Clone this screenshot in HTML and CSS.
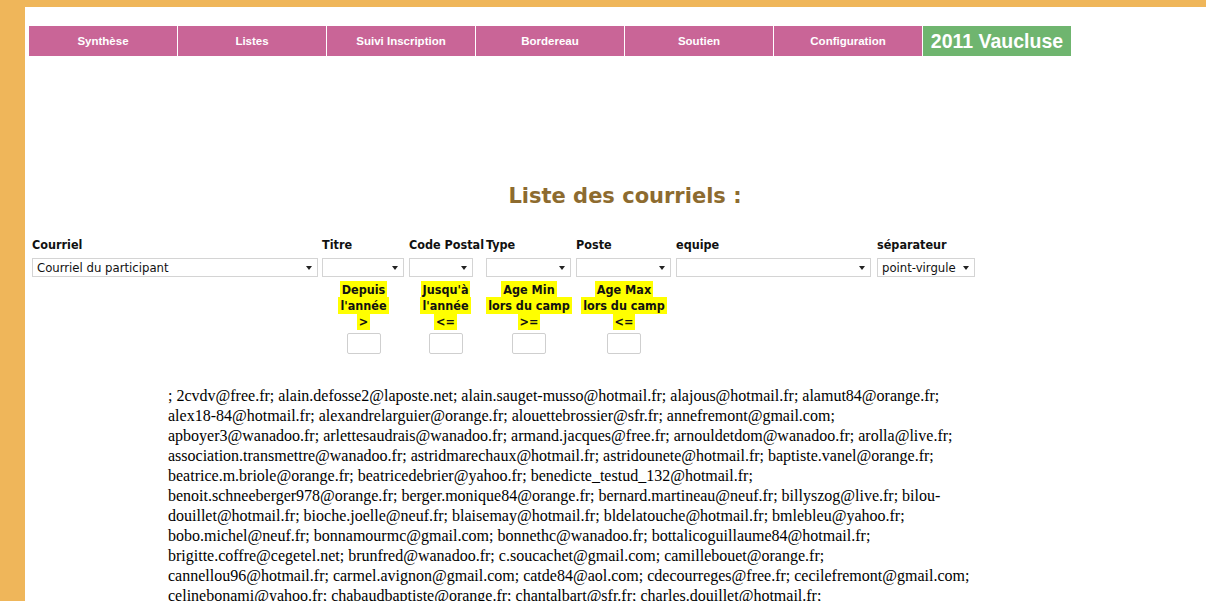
FILE: index.html
```html
<!DOCTYPE html>
<html lang="fr">
<head>
<meta charset="utf-8">
<title>Liste des courriels</title>
<link rel="stylesheet" href="styles.css">
</head>
<body>
<div class="page">
  <nav class="menu">
    <a class="tab">Synthèse</a>
    <a class="tab">Listes</a>
    <a class="tab">Suivi Inscription</a>
    <a class="tab">Bordereau</a>
    <a class="tab">Soutien</a>
    <a class="tab">Configuration</a>
    <span class="tab tab-year">2011 Vaucluse</span>
  </nav>

  <h1 class="title">Liste des courriels :</h1>

  <div class="filters">
    <div class="lbl">Courriel</div>
    <div class="lbl">Titre</div>
    <div class="lbl">Code Postal</div>
    <div class="lbl">Type</div>
    <div class="lbl">Poste</div>
    <div class="lbl">equipe</div>
    <div class="lbl">séparateur</div>

    <div class="sel w-courriel"><span class="sel-text">Courriel du participant</span><span class="arrow"></span></div>
    <div class="sel w-titre"><span class="sel-text"></span><span class="arrow"></span></div>
    <div class="sel w-cp"><span class="sel-text"></span><span class="arrow"></span></div>
    <div class="sel w-type"><span class="sel-text"></span><span class="arrow"></span></div>
    <div class="sel w-poste"><span class="sel-text"></span><span class="arrow"></span></div>
    <div class="sel w-equipe"><span class="sel-text"></span><span class="arrow"></span></div>
    <div class="sel w-sep"><span class="sel-text">point-virgule</span><span class="arrow"></span></div>

    <div class="crit c2"><p class="hl"><span>Depuis</span><br><span>l'année</span><br><span>&gt;</span></p><div class="box"></div></div>
    <div class="crit c3"><p class="hl"><span>Jusqu'à</span><br><span>l'année</span><br><span>&lt;=</span></p><div class="box"></div></div>
    <div class="crit c4"><p class="hl"><span>Age Min</span><br><span>lors du camp</span><br><span>&gt;=</span></p><div class="box"></div></div>
    <div class="crit c5"><p class="hl"><span>Age Max</span><br><span>lors du camp</span><br><span>&lt;=</span></p><div class="box"></div></div>
  </div>

  <p class="emails">; 2cvdv@free.fr; alain.defosse2@laposte.net; alain.sauget-musso@hotmail.fr; alajous@hotmail.fr; alamut84@orange.fr; alex18-84@hotmail.fr; alexandrelarguier@orange.fr; alouettebrossier@sfr.fr; annefremont@gmail.com; apboyer3@wanadoo.fr; arlettesaudrais@wanadoo.fr; armand.jacques@free.fr; arnouldetdom@wanadoo.fr; arolla@live.fr; association.transmettre@wanadoo.fr; astridmarechaux@hotmail.fr; astridounete@hotmail.fr; baptiste.vanel@orange.fr; beatrice.m.briole@orange.fr; beatricedebrier@yahoo.fr; benedicte_testud_132@hotmail.fr; benoit.schneeberger978@orange.fr; berger.monique84@orange.fr; bernard.martineau@neuf.fr; billyszog@live.fr; bilou-douillet@hotmail.fr; bioche.joelle@neuf.fr; blaisemay@hotmail.fr; bldelatouche@hotmail.fr; bmlebleu@yahoo.fr; bobo.michel@neuf.fr; bonnamourmc@gmail.com; bonnethc@wanadoo.fr; bottalicoguillaume84@hotmail.fr; brigitte.coffre@cegetel.net; brunfred@wanadoo.fr; c.soucachet@gmail.com; camillebouet@orange.fr; cannellou96@hotmail.fr; carmel.avignon@gmail.com; catde84@aol.com; cdecourreges@free.fr; cecilefremont@gmail.com; celinebonami@yahoo.fr; chabaudbaptiste@orange.fr; chantalbart@sfr.fr; charles.douillet@hotmail.fr; christine.martin84@orange.fr; claude.roux@wanadoo.fr; corinne.blanc@free.fr;</p>
</div>
</body>
</html>
```

FILE: styles.css
```css
html, body {
  margin: 0;
  padding: 0;
}

body {
  background: #efb65a;
  font-family: "Liberation Serif", "Times New Roman", serif;
}

.page {
  margin: 7px 0 0 25px;
  background: #ffffff;
  padding: 19px 0 0 4px;
  min-height: 700px;
}

/* ---------- menu ---------- */
.menu {
  display: flex;
  gap: 1px;
  height: 30px;
}

.tab {
  width: 148px;
  height: 30px;
  background: #c96597;
  color: #ffffff;
  font-family: "Liberation Sans", Arial, sans-serif;
  font-weight: bold;
  font-size: 11.5px;
  display: flex;
  align-items: center;
  justify-content: center;
  text-decoration: none;
}

.tab-year {
  background: #6fb56f;
  font-size: 19.5px;
}

/* ---------- title ---------- */
.title {
  margin: 127px 0 0 0;
  text-align: center;
  font-family: "DejaVu Sans", Verdana, sans-serif;
  font-weight: bold;
  font-size: 21px;
  line-height: 26px;
  color: #8d6b2f;
  padding-left: 15px;
}

/* ---------- filters ---------- */
.filters {
  margin: 28px 0 0 3px;
  display: grid;
  grid-template-columns: 286px 83px 73px 86px 96px 197px 99px;
  column-gap: 4px;
  row-gap: 5px;
  font-family: "DejaVu Sans Condensed", "DejaVu Sans", Tahoma, sans-serif;
  font-stretch: semi-condensed;
  color: #111;
}

.lbl {
  font-weight: bold;
  font-size: 12.5px;
  line-height: 16px;
  white-space: nowrap;
}

.sel {
  height: 19px;
  box-sizing: border-box;
  border: 1px solid #d4d4d4;
  background: #fff;
  display: flex;
  align-items: center;
  padding: 0 5px 0 4px;
  font-size: 13px;
}

.sel-text {
  flex: 1;
  white-space: nowrap;
  overflow: hidden;
}

.arrow {
  width: 0;
  height: 0;
  border-left: 3.5px solid transparent;
  border-right: 3.5px solid transparent;
  border-top: 4px solid #222;
}

.w-courriel { width: 286px; }
.w-titre { width: 82px; }
.w-cp { width: 64px; }
.w-type { width: 85px; }
.w-poste { width: 95px; }
.w-equipe { width: 195px; }
.w-sep { width: 98px; }

.crit {
  display: flex;
  flex-direction: column;
  align-items: center;
}

.c2 { grid-column: 2; }
.c3 { grid-column: 3; }
.c4 { grid-column: 4; }
.c5 { grid-column: 5; }

.hl {
  margin: 0;
  text-align: center;
  font-weight: bold;
  font-size: 12.5px;
  line-height: 16px;
  white-space: nowrap;
}

.hl span {
  background: #ffff00;
  padding: 1px 2px;
}

.box {
  margin-top: 3px;
  width: 34px;
  height: 21px;
  box-sizing: border-box;
  border: 1px solid #cfcfcf;
  border-radius: 2px;
  background: #fff;
}

/* ---------- emails ---------- */
.emails {
  margin: 32px 0 0 139px;
  width: 802px;
  font-size: 16px;
  line-height: 20px;
  color: #000;
}
```
